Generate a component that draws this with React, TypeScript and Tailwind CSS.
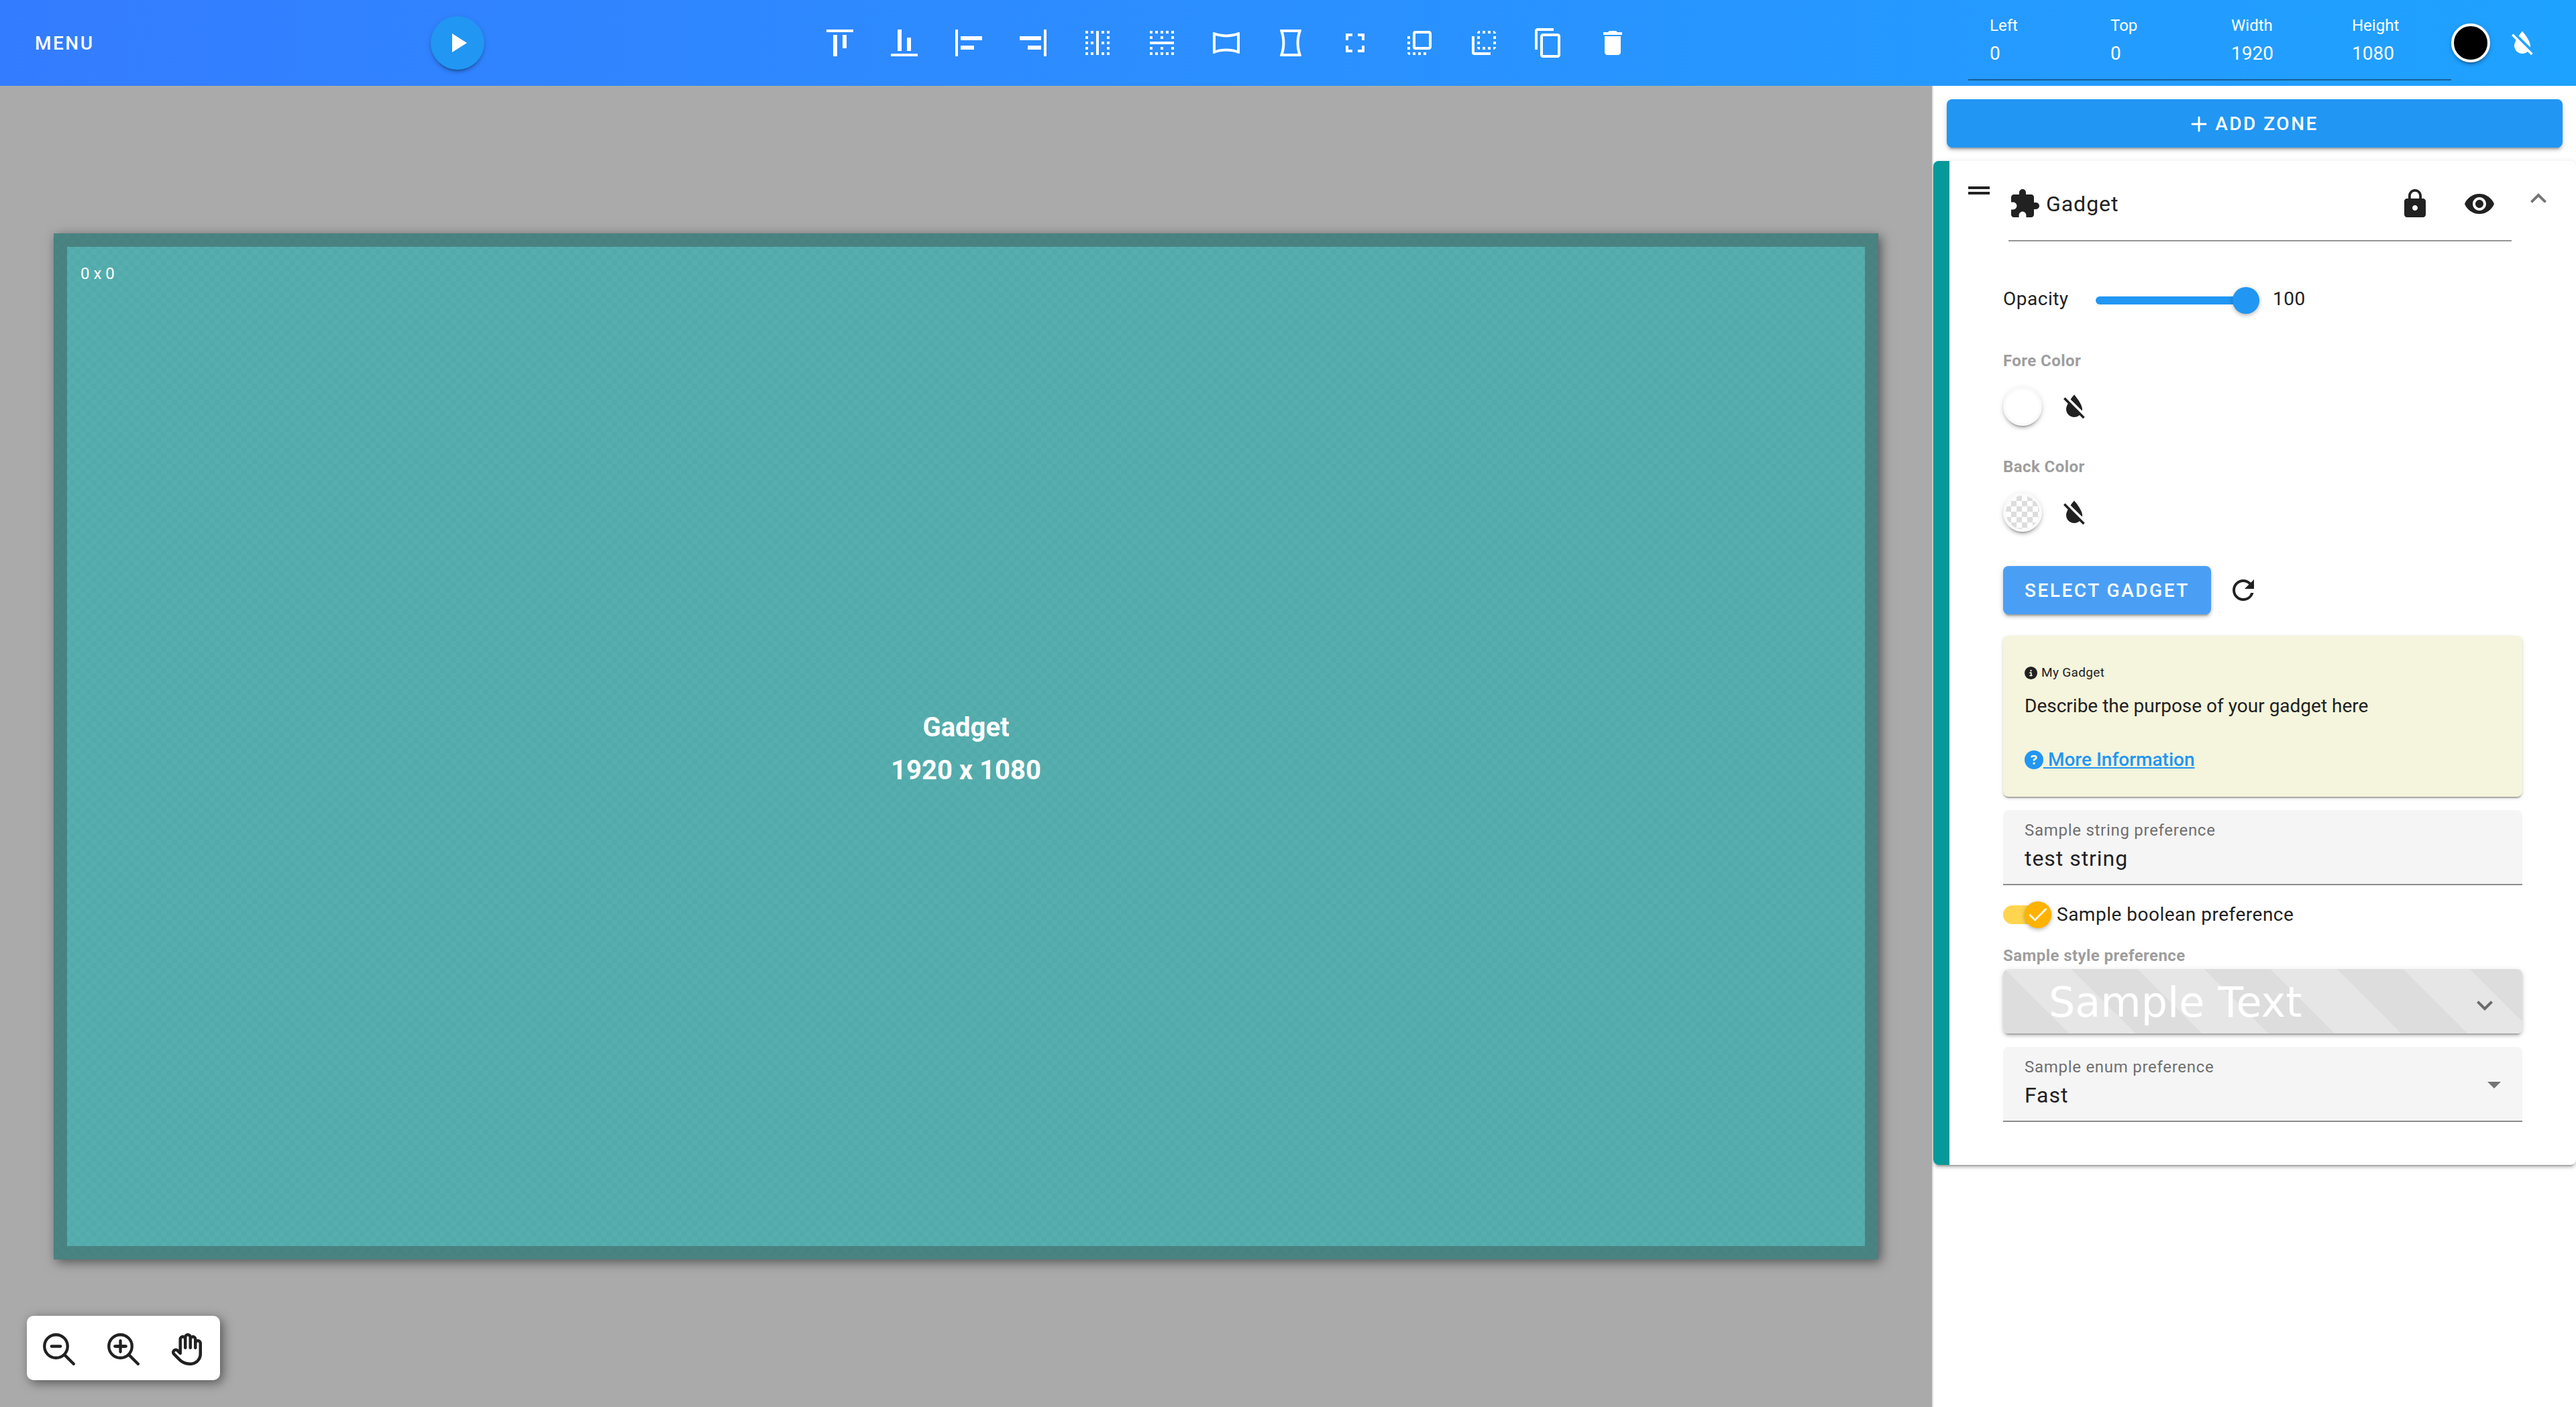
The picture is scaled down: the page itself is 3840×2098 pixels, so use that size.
import type { ReactNode } from "react";
import {
  MdAlignHorizontalLeft,
  MdAlignHorizontalRight,
  MdAlignVerticalBottom,
  MdAlignVerticalTop,
  MdArrowDropDown,
  MdBorderHorizontal,
  MdBorderVertical,
  MdContentCopy,
  MdDelete,
  MdDragHandle,
  MdExpandLess,
  MdExpandMore,
  MdExtension,
  MdFlipToBack,
  MdFlipToFront,
  MdFormatColorReset,
  MdFullscreen,
  MdLock,
  MdPanoramaHorizontal,
  MdPanoramaVertical,
  MdPlayArrow,
  MdRefresh,
  MdVisibility,
} from "react-icons/md";
import { FaCircleInfo, FaCircleQuestion, FaRegHand } from "react-icons/fa6";

const raised =
  "shadow-[0_6px_2px_-4px_rgba(0,0,0,0.2),0_4px_4px_0_rgba(0,0,0,0.14),0_2px_10px_0_rgba(0,0,0,0.12)]";
const low =
  "shadow-[0_4px_2px_-2px_rgba(0,0,0,0.2),0_2px_2px_0_rgba(0,0,0,0.14),0_2px_6px_0_rgba(0,0,0,0.12)]";

function IconButton({ label, children }: { label: string; children: ReactNode }) {
  return (
    <button
      type="button"
      aria-label={label}
      className="flex size-24 shrink-0 items-center justify-center text-[48px]"
    >
      {children}
    </button>
  );
}

const tools = [
  { label: "Align top", icon: <MdAlignVerticalTop /> },
  { label: "Align bottom", icon: <MdAlignVerticalBottom /> },
  { label: "Align left", icon: <MdAlignHorizontalLeft /> },
  { label: "Align right", icon: <MdAlignHorizontalRight /> },
  { label: "Center vertically", icon: <MdBorderVertical /> },
  { label: "Center horizontally", icon: <MdBorderHorizontal /> },
  { label: "Fill width", icon: <MdPanoramaHorizontal /> },
  { label: "Fill height", icon: <MdPanoramaVertical /> },
  { label: "Fill screen", icon: <MdFullscreen /> },
  { label: "Bring to front", icon: <MdFlipToFront /> },
  { label: "Send to back", icon: <MdFlipToBack /> },
  { label: "Duplicate", icon: <MdContentCopy /> },
  { label: "Delete", icon: <MdDelete /> },
];

const bounds = [
  { id: "left", label: "Left", value: "0" },
  { id: "top", label: "Top", value: "0" },
  { id: "width", label: "Width", value: "1920" },
  { id: "height", label: "Height", value: "1080" },
];

function Header() {
  return (
    <header className="flex h-32 shrink-0 items-center bg-linear-to-r from-[#347cff] to-[#1ea2ff] pr-8 text-white">
      <div className="flex w-[722px] shrink-0 items-center justify-between pl-9">
        <button type="button" className="px-4 pt-0.5 text-[28px] leading-10 font-medium tracking-[0.09em]">
          MENU
        </button>
        <button
          type="button"
          aria-label="Play"
          className={`flex size-20 items-center justify-center rounded-full bg-[#2196f3] text-[48px] ${raised}`}
        >
          <MdPlayArrow />
        </button>
      </div>
      <nav aria-label="Zone tools" className="flex flex-1 justify-center">
        {tools.map((tool) => (
          <IconButton key={tool.label} label={tool.label}>
            {tool.icon}
          </IconButton>
        ))}
      </nav>
      <div className="flex h-30 self-start border-b-2 border-black/40">
        {bounds.map((field) => (
          <div key={field.id} className="flex w-[180px] flex-col px-8 pt-[22px]">
            <label htmlFor={field.id} className="text-[24px] leading-8">
              {field.label}
            </label>
            <input
              id={field.id}
              defaultValue={field.value}
              className="w-full bg-transparent pt-[6px] text-[28px] leading-10 outline-none"
            />
          </div>
        ))}
      </div>
      <button
        type="button"
        aria-label="Background color"
        className={`size-[58px] rounded-full border-4 border-white bg-black ${raised}`}
      />
      <IconButton label="Clear background color">
        <MdFormatColorReset />
      </IconButton>
    </header>
  );
}

function Magnifier({ plus }: { plus?: boolean }) {
  return (
    <svg
      viewBox="0 0 512 512"
      className="size-12"
      fill="none"
      stroke="currentColor"
      strokeWidth="46"
      strokeLinecap="round"
    >
      <circle cx="208" cy="208" r="184" />
      <path d="M340 340 488 488M136 208H280" />
      {plus && <path d="M120 208H296M208 120V296" />}
    </svg>
  );
}

function Stage() {
  return (
    <main className="relative flex flex-1 items-center bg-[#aaaaaa] px-20">
      <section
        aria-label="Layout"
        className="relative flex aspect-video w-full items-center justify-center bg-[conic-gradient(#52abab_25%,#57aeae_0_50%,#52abab_0_75%,#57aeae_0)] bg-size-[16px_16px] text-center text-white shadow-[4px_4px_16px_rgba(0,0,0,0.5)]"
      >
        <div className="absolute inset-0 border-20 border-[#3f615d]/55 p-5 text-left text-[24px] leading-10">
          0 x 0
        </div>
        <h1 className="pt-2 text-[40px] leading-16 font-bold">
          Gadget
          <br />
          1920 x 1080
        </h1>
      </section>
      <div className="absolute bottom-10 left-10 flex h-24 rounded-[10px] bg-white pt-0.5 text-[#212121] shadow-[4px_4px_16px_rgba(0,0,0,0.5)]">
        <IconButton label="Zoom out">
          <Magnifier />
        </IconButton>
        <IconButton label="Zoom in">
          <Magnifier plus />
        </IconButton>
        <IconButton label="Pan">
          <FaRegHand />
        </IconButton>
      </div>
    </main>
  );
}

function ColorRow({ label, transparent }: { label: string; transparent?: boolean }) {
  return (
    <div>
      <h3 className="text-[24px] leading-8 font-bold tracking-[0.018em] text-[#9e9e9e]">{label}</h3>
      <div className="flex items-center pt-1">
        <button
          type="button"
          aria-label={label}
          className={`size-[58px] rounded-full border-4 border-[#fafafa] bg-white ${raised}`}
        >
          {transparent && (
            <span className="block size-full rounded-full bg-[conic-gradient(#ffffff_25%,#dddddd_0_50%,#ffffff_0_75%,#dddddd_0)] bg-size-[16px_16px]" />
          )}
        </button>
        <IconButton label={`Clear ${label}`}>
          <MdFormatColorReset />
        </IconButton>
      </div>
    </div>
  );
}

function Sidebar() {
  return (
    <aside className="w-[960px] shrink-0 border-l-2 border-[#e0e0e0] bg-white text-[#212121]">
      <div className="p-5">
        <button
          type="button"
          className={`flex h-18 w-full items-center justify-center gap-3 rounded-lg bg-[#2196f3] pt-0.5 text-[28px] font-medium tracking-[0.09em] text-white ${raised}`}
        >
          <svg
            viewBox="0 0 24 24"
            className="size-6"
            fill="none"
            stroke="currentColor"
            strokeWidth="3"
            strokeLinecap="round"
          >
            <path d="M12 2V22M2 12H22" />
          </svg>
          ADD ZONE
        </button>
      </div>

      <section className={`rounded-lg border-l-24 border-[#069999] pb-16 ${raised}`}>
        <div className="flex items-start gap-5 pt-2 pr-8 pl-5">
          <button type="button" aria-label="Reorder" className="pt-3 text-[48px]">
            <MdDragHandle />
          </button>
          <div className="flex h-28 flex-1 items-center border-b-2 border-[#949494] pt-0.5">
            <MdExtension className="shrink-0 text-[48px]" />
            <input
              aria-label="Zone name"
              defaultValue="Gadget"
              className="min-w-0 flex-1 bg-transparent pl-2 text-[32px] leading-12 tracking-[0.03em] outline-none"
            />
            <IconButton label="Lock">
              <MdLock />
            </IconButton>
            <IconButton label="Visibility">
              <MdVisibility />
            </IconButton>
          </div>
          <button type="button" aria-label="Collapse" className="-ml-1 pt-6 text-[48px] text-[#757575]">
            <MdExpandLess />
          </button>
        </div>

        <div className="px-20 pt-[62px]">
          <div className="flex h-13 items-center text-[28px] leading-10">
            <label htmlFor="opacity" className="w-[138px] pb-1 tracking-[0.018em]">
              Opacity
            </label>
            <input
              id="opacity"
              type="range"
              min="0"
              max="100"
              defaultValue="100"
              className="h-3 w-[244px] appearance-none rounded-full bg-[#2196f3] [&::-webkit-slider-thumb]:size-10 [&::-webkit-slider-thumb]:appearance-none [&::-webkit-slider-thumb]:rounded-full [&::-webkit-slider-thumb]:bg-[#2196f3] [&::-webkit-slider-thumb]:shadow-[0_2px_6px_rgba(0,0,0,0.3)]"
            />
            <output htmlFor="opacity" className="pb-1 pl-5 tracking-[0.018em]">
              100
            </output>
          </div>

          <div className="flex flex-col gap-[26px] pt-12">
            <ColorRow label="Fore Color" />
            <ColorRow label="Back Color" transparent />
          </div>

          <div className="flex items-center pt-5">
            <button
              type="button"
              className={`h-18 rounded-lg bg-[#4a9ff5] px-8 pt-0.5 text-[28px] font-medium tracking-[0.09em] whitespace-nowrap text-white ${raised}`}
            >
              SELECT GADGET
            </button>
            <IconButton label="Reload gadget">
              <MdRefresh />
            </IconButton>
          </div>

          <div className={`mt-5 flex h-60 flex-col rounded-lg bg-[#f5f4dc] px-8 pt-[41px] ${low}`}>
            <h4 className="flex items-center gap-[6px] text-[19px] leading-7 tracking-[0.018em]">
              <FaCircleInfo />
              My Gadget
            </h4>
            <p className="pt-4 text-[28px] leading-10">Describe the purpose of your gadget here</p>
            <a
              href="#more"
              className="flex items-center pt-10 text-[28px] leading-10 font-medium text-[#2196f3]"
            >
              <FaCircleQuestion />
              <span className="whitespace-pre underline"> More Information</span>
            </a>
          </div>

          <div className="mt-5 flex h-28 flex-col rounded-t-lg border-b-2 border-[#8c8c8c] bg-[#f5f5f5] px-8 pt-[14px]">
            <label htmlFor="string-pref" className="text-[24px] leading-8 tracking-[0.03em] text-[#6f6f6f]">
              Sample string preference
            </label>
            <input
              id="string-pref"
              defaultValue="test string"
              className="w-full bg-transparent pt-0.5 text-[32px] leading-12 tracking-[0.03em] outline-none"
            />
          </div>

          <label className="mt-6 flex h-10 items-center gap-2 text-[28px] leading-10 tracking-[0.018em]">
            <input type="checkbox" role="switch" defaultChecked className="peer sr-only" />
            <span className="flex h-7 w-18 items-center justify-end rounded-full bg-[#ffd54f]">
              <span className="flex size-10 items-center justify-center rounded-full bg-[#ffb300] shadow-[0_2px_6px_rgba(0,0,0,0.3)]">
                <svg viewBox="0 0 24 24" className="size-9 fill-white">
                  <path d="M19.69 5.23 8.96 15.96 4.23 11.23 2.96 12.5 8.96 18.5 20.96 6.5Z" />
                </svg>
              </span>
            </span>
            Sample boolean preference
          </label>

          <h3 className="pt-[25px] text-[24px] leading-8 font-bold tracking-[0.018em] text-[#9e9e9e]">
            Sample style preference
          </h3>
          <button
            type="button"
            className={`mt-1 flex h-24 w-full items-center justify-between rounded-lg bg-[repeating-linear-gradient(45deg,#dddddd_0_70px,#e6e6e6_70px_140px)] pr-8 pl-17 ${raised}`}
          >
            <span className="pt-1 font-['DejaVu_Sans',sans-serif] text-[62px] leading-24 text-white">
              Sample Text
            </span>
            <MdExpandMore className="mt-3 text-[48px] text-[#6b6b6b]" />
          </button>

          <div className="relative mt-5 flex h-28 flex-col rounded-t-lg border-b-2 border-[#8c8c8c] bg-[#f5f5f5] pt-[14px]">
            <label htmlFor="enum-pref" className="px-8 text-[24px] leading-8 tracking-[0.03em] text-[#6f6f6f]">
              Sample enum preference
            </label>
            <select
              id="enum-pref"
              defaultValue="Fast"
              className="w-full appearance-none bg-transparent px-8 pt-0.5 text-[32px] leading-12 tracking-[0.03em] outline-none"
            >
              <option>Fast</option>
            </select>
            <MdArrowDropDown className="pointer-events-none absolute top-8 right-[18px] text-[48px] text-[#757575]" />
          </div>
        </div>
      </section>
    </aside>
  );
}

export default function App() {
  return (
    <div className="flex min-h-screen flex-col bg-white font-[Roboto,sans-serif]">
      <Header />
      <div className="flex flex-1">
        <Stage />
        <Sidebar />
      </div>
    </div>
  );
}
